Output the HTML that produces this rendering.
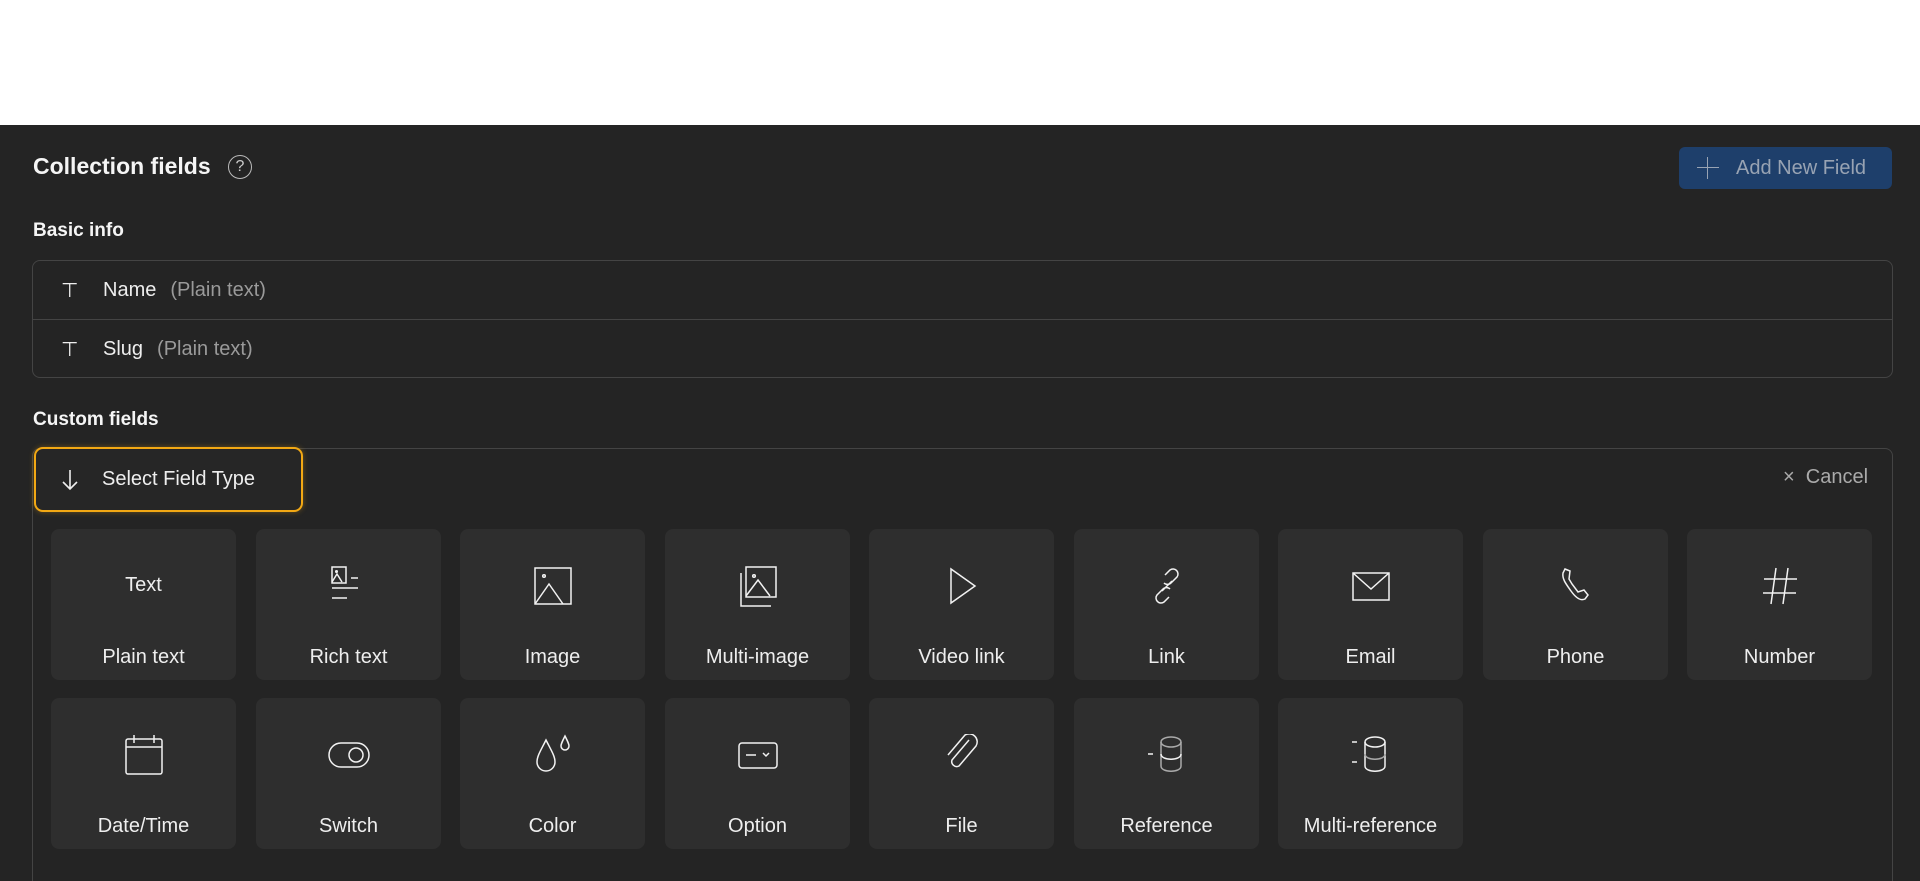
<!DOCTYPE html>
<html style="overflow:hidden;height:881px"><head><meta charset="utf-8"><style>
*{box-sizing:border-box;margin:0;padding:0}
body{width:1920px;height:881px;background:#fff;font-family:"Liberation Sans",sans-serif;overflow:hidden;position:relative}
.dark{position:absolute;left:0;top:125px;width:1920px;height:756px;background:#242424}
.a{position:absolute}
.h{font-weight:bold;color:#f5f5f5}
.box{position:absolute;border:1.5px solid #444;border-radius:8px}
.row{position:absolute;left:0;right:0;height:59px;display:flex;align-items:center;font-size:20px;color:#eee}
.row .ic{width:70px;padding-left:28px;font-size:20px}
.row .g{color:#9a9a9a;margin-left:14px}
.card{position:absolute;width:185px;height:151px;background:#2e2e2e;border-radius:8px}
.card svg{position:absolute;left:72px;top:36px;width:42px;height:42px;fill:none;stroke:#f2f2f2;stroke-width:1.5}
.card span{position:absolute;left:0;right:0;top:116px;text-align:center;font-size:20px;color:#eee;line-height:24px}
</style></head><body>
<div class="dark"></div>
<div class="a h" style="left:33px;top:153px;font-size:23px">Collection fields</div>
<div class="a" style="left:228px;top:155px;width:24px;height:24px;border:1.5px solid #bbb;border-radius:50%;color:#ccc;font-size:16px;text-align:center;line-height:21px">?</div>
<div class="a" style="left:1679px;top:147px;width:213px;height:42px;background:#1e3f6b;border-radius:6px;color:#98a3b3;font-size:20px;line-height:42px;padding-left:57px">Add New Field</div>
<div class="a" style="left:1697px;top:157px;width:22px;height:22px"><div class="a" style="left:10px;top:0;width:1px;height:22px;background:#98a3b3"></div><div class="a" style="left:0;top:10px;width:22px;height:1px;background:#98a3b3"></div></div>
<div class="a h" style="left:33px;top:220px;font-size:19px">Basic info</div>
<div class="box" style="left:32px;top:260px;width:1861px;height:118px">
<div class="row" style="top:0"><span class="ic">⊤</span>Name<span class="g">(Plain text)</span></div>
<div style="position:absolute;left:0;right:0;top:58px;border-top:1.5px solid #444"></div>
<div class="row" style="top:59px"><span class="ic">⊤</span>Slug<span class="g">(Plain text)</span></div>
</div>
<div class="a h" style="left:33px;top:409px;font-size:19px">Custom fields</div>
<div class="box" style="left:32px;top:448px;width:1861px;height:433px;border-bottom:none;border-radius:8px 8px 0 0"></div>
<div class="a" style="left:34px;top:447px;width:269px;height:65px;border:2px solid #f2a814;border-radius:9px;background:#262626;box-shadow:0 0 6px rgba(242,168,20,.35);color:#eee;font-size:20px;line-height:61px;padding-left:66px">Select Field Type</div>
<svg class="a" style="left:60px;top:468px" width="20" height="24" fill="none" stroke="#eee" stroke-width="1.6"><path d="M10 2v19M3 14l7 7 7-7"/></svg>
<div class="a" style="left:1783px;top:466px;color:#aaa;font-size:20px">×&nbsp;&nbsp;Cancel</div>

<div class="card" style="left:51px;top:529px"><div class="a" style="left:0;right:0;top:45px;text-align:center;font-size:20px;color:#eee">Text</div><span>Plain text</span></div>
<div class="card" style="left:256px;top:529px"><svg viewBox="0 0 42 42"><rect x="4" y="2" width="14" height="16"/><circle cx="8.5" cy="6.5" r=".8"/><path d="M4 17l5-8 5 8M23 13h7M4 23h26M4 33h15"/></svg><span>Rich text</span></div>
<div class="card" style="left:460px;top:529px"><svg viewBox="0 0 42 42"><rect x="3" y="3" width="36" height="36"/><circle cx="12" cy="11" r="1.3"/><path d="M3 39l14-20 14 20"/></svg><span>Image</span></div>
<div class="card" style="left:665px;top:529px"><svg viewBox="0 0 42 42"><rect x="9" y="2" width="30" height="30"/><circle cx="17" cy="11" r="1.3"/><path d="M9 31l12-16 12 16M4 8v33h30"/></svg><span>Multi-image</span></div>
<div class="card" style="left:869px;top:529px"><svg viewBox="0 0 42 42"><path d="M10 4v34l24-17z"/></svg><span>Video link</span></div>
<div class="card" style="left:1074px;top:529px"><svg viewBox="0 0 42 42"><path d="M19 10l5-5a5 5 0 017 7l-6 6a5 5 0 01-7 0M23 32l-5 5a5 5 0 01-7-7l6-6a5 5 0 017 0M16 26l10-10"/></svg><span>Link</span></div>
<div class="card" style="left:1278px;top:529px"><svg viewBox="0 0 42 42"><rect x="3" y="8" width="36" height="27"/><path d="M3 8l18 16 18-16"/></svg><span>Email</span></div>
<div class="card" style="left:1483px;top:529px"><svg viewBox="0 0 42 42"><path d="M10 4l5 2-1 8 3 5 6 8 6-2 4 5-3 4c-4 2-9-1-14-8S7 14 8 8z"/></svg><span>Phone</span></div>
<div class="card" style="left:1687px;top:529px"><svg viewBox="0 0 42 42"><path d="M17 3l-5 36M29 3l-5 36M5 14h33M4 28h33"/></svg><span>Number</span></div>

<div class="card" style="left:51px;top:698px"><svg viewBox="0 0 42 42"><rect x="3" y="5" width="36" height="35" rx="2"/><path d="M11 1v8M31 1v8M3 13h36"/></svg><span>Date/Time</span></div>
<div class="card" style="left:256px;top:698px"><svg viewBox="0 0 42 42"><rect x="1" y="9" width="40" height="24" rx="12"/><circle cx="28" cy="21" r="7"/></svg><span>Switch</span></div>
<div class="card" style="left:460px;top:698px"><svg viewBox="0 0 42 42"><path d="M14 6c-5 10-9 16-9 22a9 9 0 0018 0c0-6-4-12-9-22zM33 2c-3 6-4 8-4 10a4 4 0 008 0c0-2-1-4-4-10z"/></svg><span>Color</span></div>
<div class="card" style="left:665px;top:698px"><svg viewBox="0 0 42 42"><rect x="2" y="9" width="38" height="25" rx="3"/><path d="M9 21h10M26 19l3 3 3-3"/></svg><span>Option</span></div>
<div class="card" style="left:869px;top:698px"><svg viewBox="0 0 42 42"><path d="M28 6l-17 20a5 5 0 007 6L35 12a8 8 0 00-11-11L7 21"/></svg><span>File</span></div>
<div class="card" style="left:1074px;top:698px"><svg viewBox="0 0 42 42"><ellipse cx="25" cy="8" rx="10" ry="5" stroke="#aaa"/><path d="M15 8v24c0 7 20 7 20 0V8" stroke="#aaa"/><path d="M15 20c0 7 20 7 20 0M2 20h5"/></svg><span>Reference</span></div>
<div class="card" style="left:1278px;top:698px"><svg viewBox="0 0 42 42"><ellipse cx="25" cy="8" rx="10" ry="5"/><path d="M15 8v24c0 7 20 7 20 0V8"/><path d="M15 20c0 7 20 7 20 0" stroke="#aaa"/><path d="M2 8h5M2 28h5"/></svg><span>Multi-reference</span></div>
</body></html>
